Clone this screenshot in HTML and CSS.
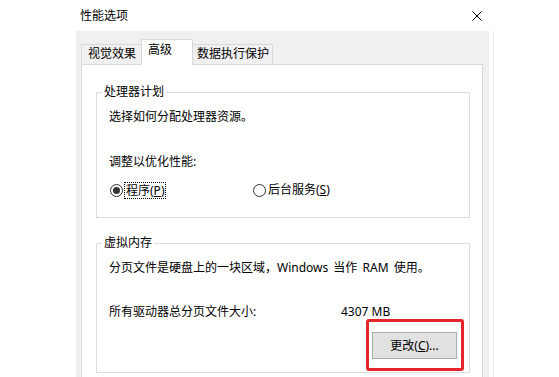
FILE: index.html
```html
<!DOCTYPE html>
<html lang="zh-CN">
<head>
<meta charset="utf-8">
<title>性能选项</title>
<link rel="stylesheet" href="styles.css">
</head>
<body>
<div class="titlebar">
  <span class="title">性能选项</span>
  <svg class="close" width="10" height="10" viewBox="0 0 10 10"><path d="M0.5 0.5L9.5 9.5M9.5 0.5L0.5 9.5" stroke="#000" stroke-width="1" fill="none"/></svg>
</div>
<div class="frame">
  <div class="dialog">
    <div class="tabs">
      <div class="tab t1">视觉效果</div>
      <div class="tab active t2">高级</div>
      <div class="tab t3">数据执行保护</div>
    </div>
    <div class="panel">
      <fieldset class="group g1">
        <legend>处理器计划</legend>
        <p class="line">选择如何分配处理器资源。</p>
        <p class="line gap">调整以优化性能:</p>
        <div class="radios">
          <label class="radio r1"><span class="dot checked"></span><span class="focus">程序(<u>P</u>)</span></label>
          <label class="radio r2"><span class="dot"></span><span class="rtext">后台服务(<u>S</u>)</span></label>
        </div>
      </fieldset>
      <fieldset class="group g2">
        <legend>虚拟内存</legend>
        <p class="line wide">分页文件是硬盘上的一块区域，Windows 当作 RAM 使用。</p>
        <div class="size-row"><span>所有驱动器总分页文件大小:</span><span>4307 MB</span></div>
        <div class="btn-row"><span class="btn-wrap"><button class="btn" type="button">更改(<u>C</u>)...</button></span></div>
      </fieldset>
    </div>
  </div>
</div>
</body>
</html>
```

FILE: styles.css
```css
html, body {
  margin: 0;
  padding: 0;
}
body {
  background: #fff;
  color: #000;
  font-family: "Noto Sans", "Noto Sans CJK SC", sans-serif;
  font-size: 12px;
  line-height: 16px;
  width: 559px;
  height: 377px;
  overflow: hidden;
}
.titlebar {
  height: 31px;
  box-sizing: border-box;
  display: flex;
  align-items: center;
  justify-content: space-between;
  padding: 0 77px 0 80px;
}
.close {
  display: block;
}
.frame {
  display: flex;
  margin-left: 76px;
  width: 417px;
  border-right: 1px solid #efefef;
  height: 346px;
}
.dialog {
  width: 413px;
  height: 346px;
  background: #f0f0f0;
}
.tabs {
  display: flex;
  align-items: flex-end;
  padding: 8px 0 0 5px;
  height: 26px;
  margin-bottom: -1px;
  position: relative;
  z-index: 1;
}
.tab {
  box-sizing: border-box;
  height: 20px;
  margin-bottom: 1px;
  border: 1px solid #d9d9d9;
  border-bottom: 0;
  background: #f0f0f0;
  padding-top: 1px;
  white-space: nowrap;
}
.t1 {
  width: 61px;
  padding-left: 6px;
}
.t2 {
  width: 52px;
  padding-left: 6px;
}
.t3 {
  width: 81px;
  padding-left: 4px;
}
.tab.active {
  height: 26px;
  margin: 0 -1px;
  padding-top: 2px;
  background: #fff;
  position: relative;
  z-index: 2;
}
.panel {
  margin: 0 6px 0 5px;
  background: #fff;
  border: 1px solid #d9d9d9;
  height: 320px;
  box-sizing: border-box;
  padding: 19px 12px 0 14px;
}
.group {
  border: 1px solid #dcdcdc;
  margin: 0;
  padding: 9px 12px 19px 12px;
  min-width: 0;
}
.group legend {
  padding: 0 2px;
  margin-left: -7px;
  line-height: 16px;
}
.g2 {
  margin-top: 17px;
  padding-bottom: 13px;
}
.line {
  margin: 0;
  white-space: nowrap;
}
.line.wide {
  word-spacing: 2px;
}
.line.gap {
  margin-top: 29px;
}
.radios {
  display: flex;
  margin-top: 12px;
  height: 16px;
}
.radio {
  display: flex;
  align-items: center;
}
.r1 {
  width: 144px;
}
.dot {
  box-sizing: border-box;
  width: 13px;
  height: 13px;
  border: 1px solid #333;
  border-radius: 50%;
  background: #fff;
  margin-left: 1px;
  margin-right: 1px;
  display: flex;
  align-items: center;
  justify-content: center;
}
.r2 .dot {
  margin-left: 0;
  margin-right: 2px;
}
.dot.checked::before {
  content: "";
  width: 7px;
  height: 7px;
  border-radius: 50%;
  background: #333;
}
.focus {
  border: 1px dotted #000;
  padding: 0 1px;
  line-height: 15px;
}
.size-row {
  display: grid;
  grid-template-columns: 232px auto;
  margin-top: 28px;
  white-space: nowrap;
}
.btn-row {
  display: flex;
  justify-content: flex-end;
  margin-top: 12px;
}
.btn-wrap {
  position: relative;
  display: block;
}
.btn-wrap::after {
  content: "";
  position: absolute;
  left: -6px;
  top: -13px;
  right: -7px;
  bottom: -12px;
  border: 3px solid #e3262b;
  border-radius: 3px;
}
.btn {
  display: block;
  width: 85px;
  height: 27px;
  margin: 0;
  padding: 0;
  background: #e1e1e1;
  border: 1px solid #adadad;
  font-family: inherit;
  font-size: 12px;
  line-height: 16px;
  color: #000;
}
u {
  text-decoration: underline;
  text-underline-offset: 1px;
}
```
